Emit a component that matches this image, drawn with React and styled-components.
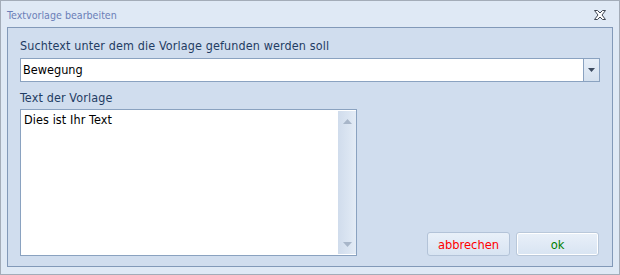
import React from "react";
import styled, { createGlobalStyle } from "styled-components";

const Global = createGlobalStyle`
  html, body { margin: 0; padding: 0; background: #ffffff; }
  * { box-sizing: border-box; }
`;

const FONT = `"DejaVu Sans Condensed", "DejaVu Sans", sans-serif`;

const Window = styled.div`
  width: 620px;
  height: 275px;
  border: 1px solid #a3acb8;
  background: #dfe9f5;
  display: flex;
  flex-direction: column;
  font-family: ${FONT};
`;

const TitleBar = styled.div`
  height: 26px;
  display: flex;
  align-items: center;
  justify-content: space-between;
  padding: 0 13px 0 6px;
`;

const Title = styled.span`
  font-family: ${FONT};
  font-size: 10.6px;
  color: #6b7fb8;
  padding-top: 1px;
`;

const Close = styled.svg`
  display: block;
  margin-top: 2px;
`;

const Panel = styled.div`
  margin: 0 6px;
  height: 240px;
  border: 1px solid #8299b8;
  background: #d0ddee;
  display: flex;
  flex-direction: column;
  padding: 10px 12px 10px 12px;
`;

const Label = styled.div`
  font-size: 12.45px;
  letter-spacing: 0.14px;
  line-height: 16px;
  height: 16px;
  color: #1f3c63;
  margin-top: ${(p) => p.$mt || 0}px;
`;

const Combo = styled.div`
  margin-top: 4px;
  height: 24px;
  border: 1px solid #8aa2c0;
  background: #ffffff;
  display: flex;
`;

const ComboText = styled.div`
  flex: 1;
  font-size: 12.6px;
  line-height: 22px;
  padding-left: 2px;
  color: #000000;
`;

const DropBtn = styled.div`
  width: 16px;
  border-left: 1px solid #8aa2c0;
  background: linear-gradient(to bottom, #e6eef8, #d5e1ef);
  display: flex;
  align-items: center;
  justify-content: center;
`;

const Row = styled.div`
  margin-top: 3px;
  display: flex;
  align-items: flex-end;
  justify-content: space-between;
`;

const Memo = styled.div`
  width: 337px;
  height: 147px;
  border: 1px solid #8aa2c0;
  background: #ffffff;
  display: flex;
`;

const MemoText = styled.div`
  flex: 1;
  font-size: 12.5px;
  letter-spacing: 0.1px;
  line-height: 14px;
  padding: 3px 0 0 3px;
  color: #000000;
`;

const ScrollBar = styled.div`
  width: 18px;
  margin: 1px 0 1px 0;
  background: linear-gradient(to right, #d0dcec, #dbe5f2 60%, #e4ecf6);
  display: flex;
  flex-direction: column;
  justify-content: space-between;
  align-items: center;
  padding: 8px 0 7px;
`;

const Buttons = styled.div`
  display: flex;
  gap: 6px;
  margin-right: 1px;
`;

const Button = styled.button`
  width: 83px;
  height: 24px;
  border: 1px solid ${(p) => (p.$default ? "#b9c8da" : "#b3c3d8")};
  border-radius: 3px;
  background: linear-gradient(to bottom, #e9f0f9, #d8e4f2);
  box-shadow: ${(p) => (p.$default ? "inset 0 0 0 1px #ffffff" : "none")};
  font-family: ${FONT};
  font-size: 12.8px;
  color: ${(p) => p.$color};
  padding: 0;
  cursor: default;
`;

export default function App() {
  return (
    <>
      <Global />
      <Window>
        <TitleBar>
          <Title>Textvorlage bearbeiten</Title>
          <Close width="12" height="10" viewBox="0 0 12 10">
            <path
              d="M0.5 0.5 H3.5 L6 3 L8.5 0.5 H11.5 L8 5 L11.5 9.5 H8.5 L6 7 L3.5 9.5 H0.5 L4 5 Z"
              fill="#ffffff"
              stroke="#3f4652"
              strokeWidth="1"
              strokeLinejoin="round"
            />
          </Close>
        </TitleBar>
        <Panel>
          <Label>Suchtext unter dem die Vorlage gefunden werden soll</Label>
          <Combo>
            <ComboText>Bewegung</ComboText>
            <DropBtn>
              <svg width="7" height="4" viewBox="0 0 7 4">
                <path d="M0 0 H7 L3.5 4 Z" fill="#3c4a5f" />
              </svg>
            </DropBtn>
          </Combo>
          <Label $mt={8}>Text der Vorlage</Label>
          <Row>
            <Memo>
              <MemoText>Dies ist Ihr Text</MemoText>
              <ScrollBar>
                <svg width="9" height="5" viewBox="0 0 9 5">
                  <path d="M0 5 L4.5 0 L9 5 Z" fill="#a8b6c9" />
                </svg>
                <svg width="9" height="5" viewBox="0 0 9 5">
                  <path d="M0 0 L4.5 5 L9 0 Z" fill="#a8b6c9" />
                </svg>
              </ScrollBar>
            </Memo>
            <Buttons>
              <Button $color="#ff0000">abbrechen</Button>
              <Button $color="#008000" $default>ok</Button>
            </Buttons>
          </Row>
        </Panel>
      </Window>
    </>
  );
}
